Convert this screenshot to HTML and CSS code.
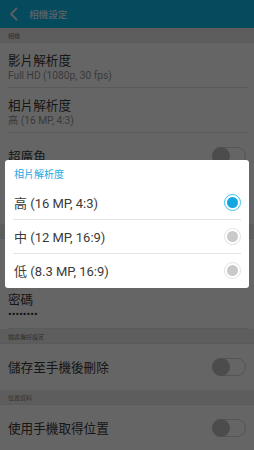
FILE: index.html
```html
<!DOCTYPE html>
<html lang="zh-Hant">
<head>
<meta charset="utf-8">
<link rel="stylesheet" href="styles.css">
</head>
<body>
<div class="screen">
  <header class="appbar">
    <svg class="back" width="12" height="16" viewBox="0 0 12 16"><path d="M8.5 2.5 L3 8 L8.5 13.5" fill="none" stroke="currentColor" stroke-width="1.8" stroke-linecap="round" stroke-linejoin="round"/></svg>
    <span class="appbar-title">相機設定</span>
  </header>

  <div class="section">相機</div>
  <div class="item two">
    <div class="title">影片解析度</div>
    <div class="sub">Full HD (1080p, 30 fps)</div>
  </div>
  <div class="item two">
    <div class="title">相片解析度</div>
    <div class="sub">高 (16 MP, 4:3)</div>
  </div>
  <div class="item one">
    <div class="title">超廣角</div>
    <span class="toggle"></span>
  </div>
  <div class="item two blank"></div>
  <div class="section"></div>
  <div class="item two blank"></div>
  <div class="item two pw">
    <div class="title">密碼</div>
    <div class="sub dots">••••••••</div>
  </div>
  <div class="section">檔案偏好設定</div>
  <div class="item one">
    <div class="title">儲存至手機後刪除</div>
    <span class="toggle"></span>
  </div>
  <div class="section">位置資料</div>
  <div class="item one">
    <div class="title">使用手機取得位置</div>
    <span class="toggle"></span>
  </div>

  <div class="scrim"></div>

  <div class="dialog">
    <div class="dialog-title">相片解析度</div>
    <div class="option"><span>高 (16 MP, 4:3)</span><span class="radio on"></span></div>
    <div class="option"><span>中 (12 MP, 16:9)</span><span class="radio"></span></div>
    <div class="option"><span>低 (8.3 MP, 16:9)</span><span class="radio"></span></div>
  </div>
</div>
</body>
</html>
```
FILE: styles.css
```css
html, body {
  margin: 0;
  padding: 0;
}
body {
  width: 254px;
  height: 450px;
  overflow: hidden;
  font-family: Roboto, "Noto Sans CJK TC", sans-serif;
  background: #fcfcfc;
}
.screen {
  position: relative;
  width: 254px;
  height: 450px;
  overflow: hidden;
  background: #fcfcfc;
}
.appbar {
  height: 28px;
  background: #0fb9eb;
  display: flex;
  align-items: center;
  color: #ffffff;
}
.back {
  margin-left: 8px;
  margin-right: 9px;
  color: #e0eef2;
}
.appbar-title {
  font-size: 9.6px;
  color: #ffffff;
  font-family: "Noto Sans CJK TC", sans-serif;
}
.section {
  height: 15px;
  background: #e8e8e8;
  font-size: 6px;
  color: #7a7a7a;
  padding-left: 8px;
  display: flex;
  align-items: center;
  border-bottom: 1px solid #e0e0e0;
  box-sizing: border-box;
  font-family: "Noto Sans CJK TC", sans-serif;
}
.item {
  margin: 0 5px 0 8px;
  border-bottom: 1px solid #e2e2e2;
  box-sizing: border-box;
  color: #383838;
}
.item.two {
  height: 45px;
  padding-top: 8px;
}
.item.pw {
  padding-top: 6px;
}
.item.one {
  height: 46px;
  display: flex;
  align-items: center;
  justify-content: space-between;
  border-bottom: none;
}
.title {
  font-size: 12.6px;
  line-height: 18px;
  font-family: "Noto Sans CJK TC", sans-serif;
}
.sub {
  font-size: 10.2px;
  line-height: 13px;
  color: #929292;
}
.sub.dots {
  font-size: 11px;
  line-height: 13px;
  color: #2e2e2e;
}
.toggle {
  width: 32px;
  height: 16px;
  border: 1px solid #d2d2d2;
  border-radius: 9px;
  position: relative;
  margin-right: 3px;
}
.toggle::before {
  content: "";
  position: absolute;
  left: -1px;
  top: -1px;
  width: 18px;
  height: 18px;
  border-radius: 50%;
  background: #bdbdbd;
}
.scrim {
  position: absolute;
  inset: 0;
  background: rgba(0, 0, 0, 0.6);
}
.dialog {
  position: absolute;
  left: 5px;
  top: 160px;
  width: 244px;
  height: 128px;
  background: #ffffff;
  border-radius: 3px;
  box-sizing: border-box;
  padding: 0 8px 0 8px;
}
.dialog-title {
  height: 25px;
  display: flex;
  align-items: center;
  padding-left: 1px;
  padding-top: 1px;
  box-sizing: border-box;
  font-size: 10px;
  color: #1ba9e2;
  font-family: "Noto Sans CJK TC", sans-serif;
}
.option {
  height: 34px;
  display: flex;
  align-items: center;
  justify-content: space-between;
  padding-left: 1px;
  font-size: 13px;
  color: #3a3a3a;
  font-family: Roboto, "Noto Sans CJK TC", sans-serif;
  box-sizing: border-box;
}
.option + .option {
  border-top: 1px solid #e4e4e4;
}
.radio {
  width: 15px;
  height: 15px;
  border-radius: 50%;
  border: 1px solid #e2e2e2;
  display: flex;
  align-items: center;
  justify-content: center;
}
.radio::after {
  content: "";
  width: 11px;
  height: 11px;
  border-radius: 50%;
  background: #c9c9c9;
}
.radio.on {
  border-color: #3fc1ef;
}
.radio.on::after {
  background: #14a6e0;
}
```
